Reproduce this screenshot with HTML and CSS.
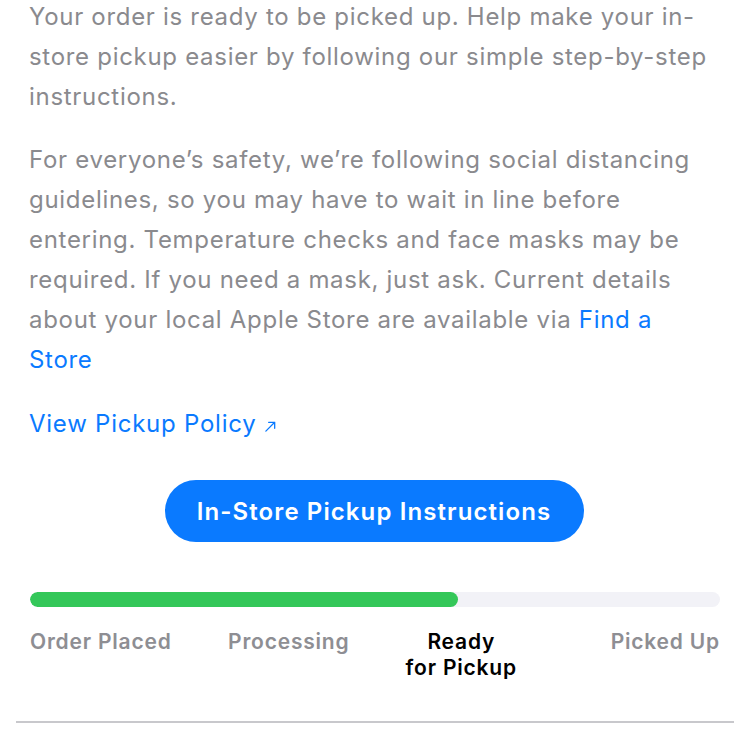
FILE: index.html
```html
<!DOCTYPE html>
<html lang="en">
<head>
    <meta charset="UTF-8">
    <meta name="viewport" content="width=device-width, initial-scale=1.0">
    <title>Order Status</title>
    <link rel="stylesheet" href="styles.css">
</head>
<body>
    <div class="container">
        <p class="intro first">Your order is ready to be picked up. Help make your in-store pickup easier by following our simple step-by-step instructions.</p>
        <p class="intro">For everyone’s safety, we’re following social distancing guidelines, so you may have to wait in line before entering. Temperature checks and face masks may be required. If you need a mask, just ask. Current details about your local Apple Store are available via <a href="#">Find a Store</a></p>

        <a href="#" class="policy">View Pickup Policy <span class="arrow">
            <svg width="13" height="13" viewBox="0 0 14 14"><path d="M2 12 L11.5 2.5 M5 2.5 H11.5 V9" fill="none" stroke="currentColor" stroke-width="1.4" stroke-linecap="round" stroke-linejoin="round"/></svg>
        </span></a>

        <div class="action">
            <button class="pickup">In-Store Pickup Instructions</button>
        </div>

        <div class="progress">
            <div class="fill" style="width: 62%"></div>
        </div>
        <div class="steps">
            <div class="step">Order Placed</div>
            <div class="step">Processing</div>
            <div class="step current">Ready<br>for Pickup</div>
            <div class="step">Picked Up</div>
        </div>
    </div>
    <hr class="divider">
</body>
</html>
```

FILE: styles.css
```css
body {
    margin: 0;
    background: #fff;
    font-family: Inter, "Noto Sans", sans-serif;
}
.container {
    padding: 0 30px 0 29px;
}
.intro {
    color: #8a8a8e;
    font-size: 24px;
    line-height: 40px;
    margin: 0 0 23px 0;
    letter-spacing: 0.7px;
}
.first {
    margin-top: -3px;
}
.intro a {
    color: #0a7aff;
    text-decoration: none;
}
.policy {
    display: inline-block;
    color: #0a7aff;
    font-size: 24px;
    line-height: 40px;
    letter-spacing: 0.75px;
    text-decoration: none;
    margin-top: 1px;
}
.arrow svg {
    vertical-align: -1px;
}
.action {
    text-align: center;
    margin-top: 36px;
    padding-right: 1px;
}
.pickup {
    width: 419px;
    height: 62px;
    border: none;
    border-radius: 31px;
    background: #0a7aff;
    color: #fff;
    font-family: Inter, "Noto Sans", sans-serif;
    font-size: 24px;
    font-weight: 600;
    letter-spacing: 1.1px;
    cursor: pointer;
}
.progress {
    margin-top: 50px;
    height: 15px;
    background: #f2f2f7;
    border-radius: 8px;
    overflow: hidden;
    margin-left: 1px;
}
.fill {
    height: 100%;
    background: #34c759;
    border-radius: 8px;
}
.steps {
    display: grid;
    grid-template-columns: repeat(4, 1fr);
    margin-top: 22px;
    margin-left: 1px;
}
.step {
    color: #8e8e93;
    font-size: 21px;
    font-weight: 600;
    line-height: 26px;
    letter-spacing: 0.8px;
    text-align: center;
}
.step:first-child {
    text-align: left;
}
.step:last-child {
    text-align: right;
}
.current {
    color: #000;
}
.divider {
    border: none;
    border-top: 2px solid #c8c8cc;
    margin: 40px 16px 0 16px;
}
```
